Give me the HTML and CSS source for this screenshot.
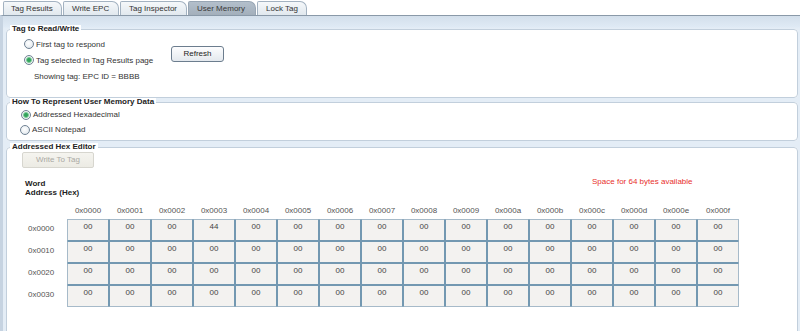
FILE: index.html
```html
<!DOCTYPE html>
<html>
<head>
<meta charset="utf-8">
<link rel="stylesheet" href="styles.css">
</head>
<body>
<div class="tabs">
  <div class="tab t1">Tag Results</div>
  <div class="tab t2">Write EPC</div>
  <div class="tab t3">Tag Inspector</div>
  <div class="tab t4 active">User Memory</div>
  <div class="tab t5">Lock Tag</div>
</div>
<div class="page">
  <fieldset class="panel p1">
    <legend>Tag to Read/Write</legend>
    <div class="p1-body">
      <div class="choices">
        <div class="opt"><span class="radio"></span>First tag to respond</div>
        <div class="opt"><span class="radio on"></span>Tag selected in Tag Results page</div>
        <div class="showing">Showing tag: EPC ID = BBBB</div>
      </div>
      <div class="btn refresh">Refresh</div>
    </div>
  </fieldset>
  <fieldset class="panel p2">
    <legend>How To Represent User Memory Data</legend>
    <div class="p2-body">
      <div class="opt"><span class="radio on"></span>Addressed Hexadecimal</div>
      <div class="opt opt-b"><span class="radio"></span>ASCII Notepad</div>
    </div>
  </fieldset>
  <fieldset class="panel p3">
    <legend>Addressed Hex Editor</legend>
    <div class="p3-body">
      <div class="btn disabled">Write To Tag</div>
      <div class="info">
        <div class="word">Word<br>Address (Hex)</div>
        <div class="space">Space for 64 bytes available</div>
      </div>
      <div class="hexgrid">
        <div class="hd"></div>
        <div class="hd">0x0000</div><div class="hd">0x0001</div><div class="hd">0x0002</div><div class="hd">0x0003</div>
        <div class="hd">0x0004</div><div class="hd">0x0005</div><div class="hd">0x0006</div><div class="hd">0x0007</div>
        <div class="hd">0x0008</div><div class="hd">0x0009</div><div class="hd">0x000a</div><div class="hd">0x000b</div>
        <div class="hd">0x000c</div><div class="hd">0x000d</div><div class="hd">0x000e</div><div class="hd">0x000f</div>

        <div class="rl">0x0000</div>
        <div class="c top first">00</div><div class="c top">00</div><div class="c top">00</div><div class="c top">44</div>
        <div class="c top">00</div><div class="c top">00</div><div class="c top">00</div><div class="c top">00</div>
        <div class="c top">00</div><div class="c top">00</div><div class="c top">00</div><div class="c top">00</div>
        <div class="c top">00</div><div class="c top">00</div><div class="c top">00</div><div class="c top last">00</div>

        <div class="rl">0x0010</div>
        <div class="c first">00</div><div class="c">00</div><div class="c">00</div><div class="c">00</div>
        <div class="c">00</div><div class="c">00</div><div class="c">00</div><div class="c">00</div>
        <div class="c">00</div><div class="c">00</div><div class="c">00</div><div class="c">00</div>
        <div class="c">00</div><div class="c">00</div><div class="c">00</div><div class="c last">00</div>

        <div class="rl">0x0020</div>
        <div class="c first">00</div><div class="c">00</div><div class="c">00</div><div class="c">00</div>
        <div class="c">00</div><div class="c">00</div><div class="c">00</div><div class="c">00</div>
        <div class="c">00</div><div class="c">00</div><div class="c">00</div><div class="c">00</div>
        <div class="c">00</div><div class="c">00</div><div class="c">00</div><div class="c last">00</div>

        <div class="rl">0x0030</div>
        <div class="c bot first">00</div><div class="c bot">00</div><div class="c bot">00</div><div class="c bot">00</div>
        <div class="c bot">00</div><div class="c bot">00</div><div class="c bot">00</div><div class="c bot">00</div>
        <div class="c bot">00</div><div class="c bot">00</div><div class="c bot">00</div><div class="c bot">00</div>
        <div class="c bot">00</div><div class="c bot">00</div><div class="c bot">00</div><div class="c bot last">00</div>
      </div>
    </div>
  </fieldset>
</div>
</body>
</html>
```

FILE: styles.css
```css
html, body {
  margin: 0;
  padding: 0;
  background: #ffffff;
  font-family: "Liberation Sans", Arial, sans-serif;
  font-size: 8px;
  color: #333;
  overflow: hidden;
  height: 331px;
}

.tabs {
  display: flex;
  gap: 1px;
  padding: 1px 0 0 3px;
  height: 14px;
}

.tab {
  box-sizing: border-box;
  height: 14px;
  line-height: 13px;
  padding-left: 8px;
  border: 1px solid #a3b2c1;
  border-bottom: none;
  border-radius: 2px 7px 0 0;
  background: linear-gradient(#f5f8fa, #e1e8ee);
  color: #333;
  white-space: nowrap;
}
.t1 { width: 59px; padding-left: 7px; }
.t2 { width: 56px; }
.t3 { width: 67px; }
.t4 { width: 68px; }
.t5 { width: 50px; }
.tab.active {
  background: linear-gradient(#b3bfcb, #a3afbb);
  border-color: #98a6b4;
  color: #3a3a3a;
}

.page {
  border-top: 1px solid #8a99a8;
  border-left: 3px solid #c6d3e1;
  background: linear-gradient(#d3dfeb 0, #dfeaf5 11px, #e4edf6 12px);
  height: 316px;
  padding-right: 2px;
  overflow: hidden;
}

.panel {
  margin: 0 0 0 3px;
  padding: 0;
  border: 1px solid #c2cfdc;
  border-radius: 4px;
  background: #fff;
  min-width: 0;
}
.panel legend {
  margin-left: 3px;
  padding: 0 2px;
  line-height: 8px;
  font-weight: bold;
  color: #222;
  background: #fff;
}

.p1 { margin-top: 9px; }
.p1-body {
  display: flex;
  align-items: flex-start;
  padding: 3px 0 13px 17px;
}
.choices { width: 132px; }
.opt {
  display: flex;
  align-items: center;
  gap: 2px;
  height: 16px;
  white-space: nowrap;
}
.showing {
  height: 16px;
  line-height: 17px;
  padding-left: 10px;
}

.radio {
  box-sizing: border-box;
  width: 10px;
  height: 10px;
  border-radius: 50%;
  border: 1px solid #6f8193;
  background: radial-gradient(circle at 45% 40%, #ffffff 0, #eef2f5 50%, #d3dbe2 100%);
  flex: none;
}
.radio.on {
  background: radial-gradient(circle at 50% 50%, #2f9a55 0, #3aa862 1.6px, #86cfa0 2.6px, #eef4f1 3.4px, #dde4ea 100%);
}

.btn {
  box-sizing: border-box;
  height: 16px;
  line-height: 14px;
  text-align: center;
  border-radius: 3px;
}
.refresh {
  width: 53px;
  margin: 10px 0 0 15px;
  border: 1px solid #6c7d8e;
  background: linear-gradient(#fdfdfe, #e4e9ee);
  color: #222;
}

.p2 { margin-top: 0; }
.p2-body {
  padding: 1px 0 3px 14px;
}
.p2-body .opt { height: 15px; }
.p2-body .opt-b { margin-left: -1px; }

.p3 { margin-top: 2px; }
.p3-body {
  padding: 1px 0 40px 15px;
}
.disabled {
  width: 72px;
  border: 1px solid #d7d6cf;
  background: linear-gradient(#f5f4ef, #ecebe4);
  color: #aaa9a4;
  border-radius: 2px;
}

.info {
  display: flex;
  margin-top: 11px;
}
.word {
  font-weight: bold;
  line-height: 9px;
  padding-left: 3px;
  width: 567px;
  color: #222;
}
.space {
  color: #e8302c;
  line-height: 9px;
  margin-top: -2px;
}

.hexgrid {
  display: grid;
  grid-template-columns: 45px repeat(16, 42px);
  margin-top: 9px;
}
.hd {
  line-height: 9px;
  height: 13px;
  text-align: center;
  color: #555;
}
.rl {
  height: 22px;
  line-height: 19px;
  padding-left: 6px;
  color: #555;
}
.c {
  box-sizing: border-box;
  height: 22px;
  padding-top: 2px;
  line-height: 9px;
  text-align: center;
  background: #f3f2f0;
  border: 1px solid #7398b1;
  color: #444;
}
.c.top { border-top-color: #a6bac9; }
.c.bot { border-bottom-color: #a6bac9; }
.c.first { border-left-color: #a6bac9; }
.c.last { border-right-color: #a6bac9; }
```
